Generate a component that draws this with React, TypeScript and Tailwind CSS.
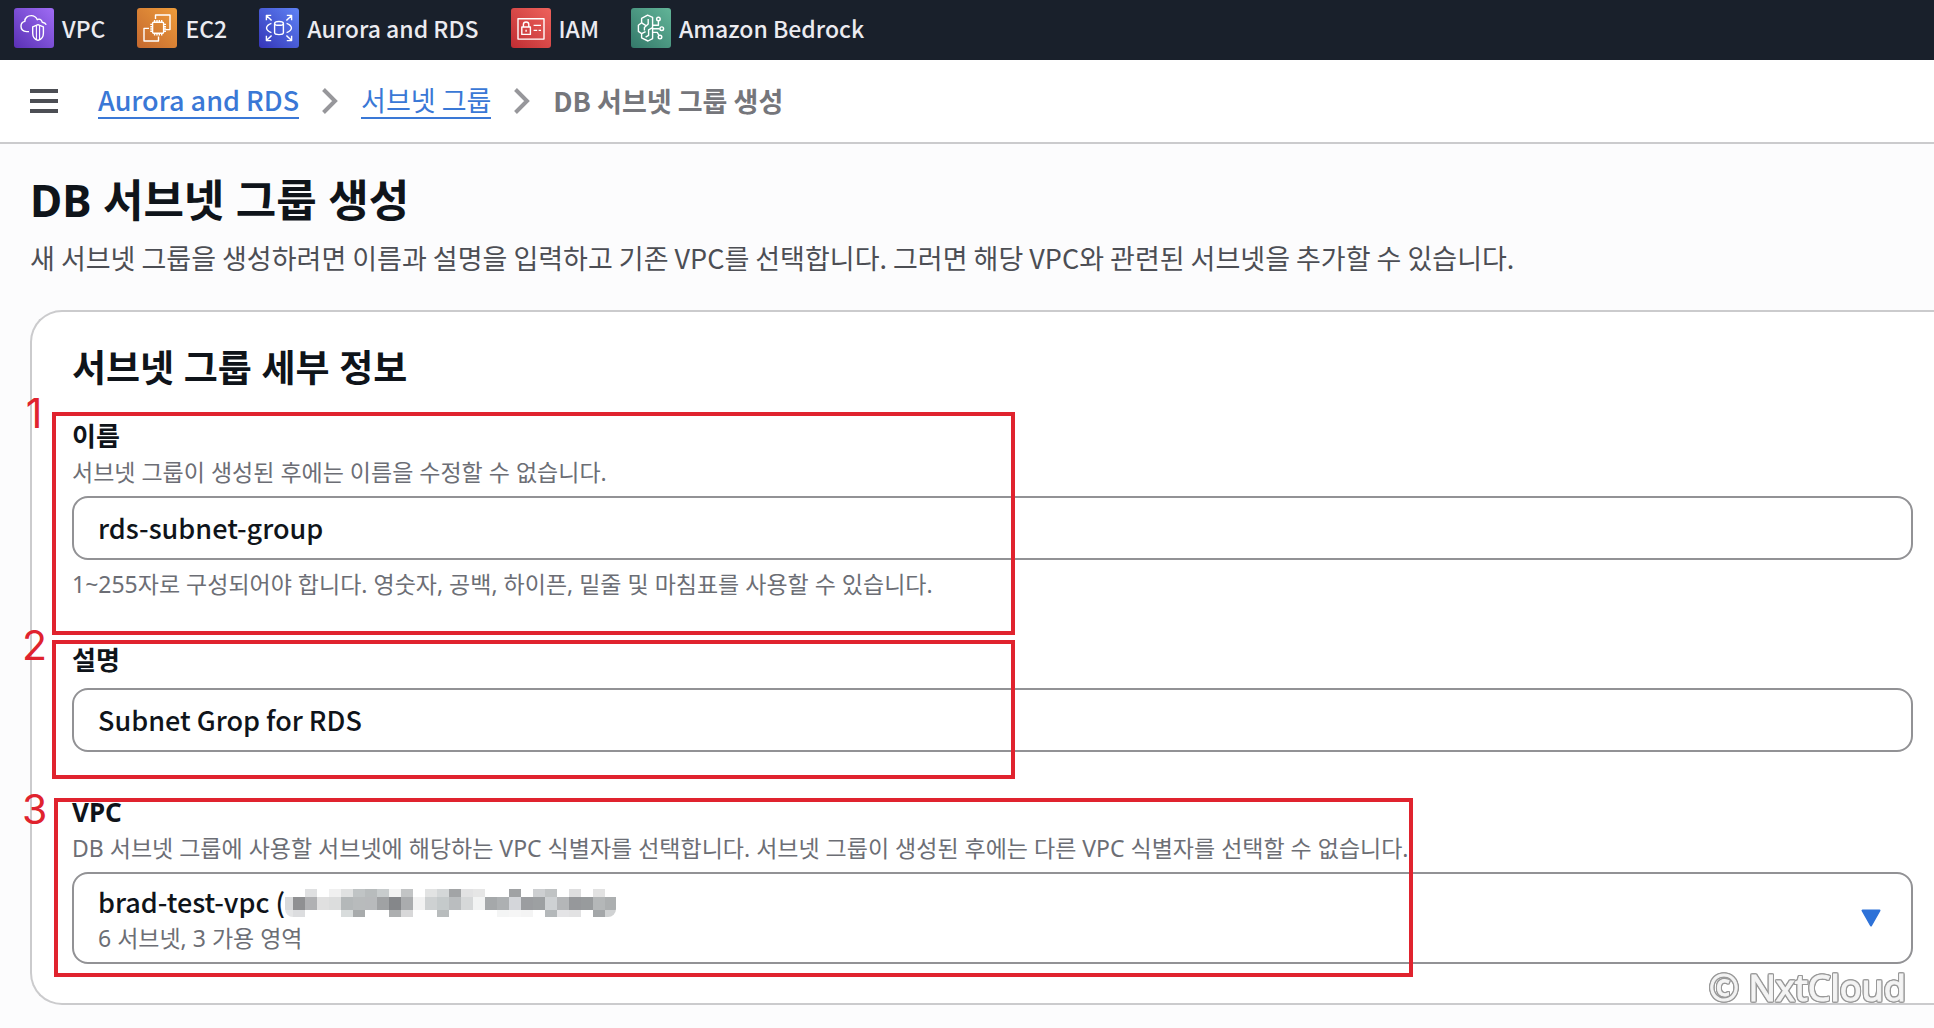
import type { ReactNode } from "react";

function Tile({ className, children }: { className: string; children: ReactNode }) {
  return (
    <span className={`block size-10 shrink-0 overflow-hidden rounded-[3px] bg-linear-to-tr ${className}`}>
      <svg viewBox="0 0 40 40" className="size-full" fill="none" stroke="white" strokeWidth="1.4" strokeLinejoin="round" aria-hidden="true">
        {children}
      </svg>
    </span>
  );
}

const services = [
  {
    name: "VPC",
    icon: (
      <Tile className="from-[#5a30b5] to-[#a06cf5]">
        <path d="M15 23.6H12.6C9.2 23.2 7 21.2 7 18.2C7 15.6 8.5 13.9 10.8 13.4C10.8 9.8 13.6 7.6 17.3 7.6C20.2 7.6 22.2 9.2 23.3 11.7C24.8 10.6 27.6 11.1 28.2 14.2C30.2 14.5 31.6 15.3 32.2 16.8" />
        <path d="M24 16.6L29.4 18.8V25.2C29.4 29 27.2 31.4 24 32.4C20.8 31.4 18.7 29 18.7 25.2V18.8Z" />
        <path d="M22.4 17.6V31.4M25.6 17.6V31.4" strokeWidth="1.1" />
      </Tile>
    ),
  },
  {
    name: "EC2",
    icon: (
      <Tile className="from-[#c4682f] to-[#ee9c3a]">
        <rect x="15.6" y="14.2" width="11" height="11" rx="1" />
        <path d="M18.5 11V7H33V21.6H28.5M12 20.4H7V33H21.5V28.5" />
        <path d="M17.6 14V12M20 14V12M22.3 14V12M24.7 14V12M17.6 25.4V27.6M20 25.4V27.6M22.3 25.4V27.6M24.7 25.4V27.6M15.4 16.4H13.3M15.4 18.7H13.3M15.4 21H13.3M15.4 23.2H13.3M26.8 16.4H29M26.8 18.7H29M26.8 21H29M26.8 23.2H29" />
      </Tile>
    ),
  },
  {
    name: "Aurora and RDS",
    icon: (
      <Tile className="from-[#3634b8] to-[#5f82f5]">
        <ellipse cx="20" cy="15.4" rx="4.4" ry="1.9" />
        <path d="M15.6 15.4V24.8C15.6 27.2 24.4 27.2 24.4 24.8V15.4" />
        <path d="M7.4 12.2V7.4H12.2M7.4 7.4L12.6 12.6M27.8 7.4H32.6V12.2M32.6 7.4L27.4 12.6M7.4 27.8V32.6H12.2M7.4 32.6L12.6 27.4M27.8 32.6H32.6V27.8M32.6 32.6L27.4 27.4" />
        <path d="M12.4 15.4C9.4 16.4 7.8 18 7.5 20C7.8 22 9.4 23.6 12.4 24.6M27.6 15.4C30.6 16.4 32.2 18 32.5 20C32.2 22 30.6 23.6 27.6 24.6" />
      </Tile>
    ),
  },
  {
    name: "IAM",
    icon: (
      <Tile className="from-[#c02c33] to-[#ee625c]">
        <rect x="7" y="10.7" width="26" height="20.4" />
        <rect x="10.8" y="19" width="8.6" height="7.4" />
        <path d="M12.4 19V16.6C12.4 13.2 17.8 13.2 17.8 16.6V19M15.1 21.8V23.8M22.6 17.4H30M22.6 22.4H26.2M27.6 22.4H30" />
      </Tile>
    ),
  },
  {
    name: "Amazon Bedrock",
    icon: (
      <Tile className="from-[#34796a] to-[#62b598]">
        <path d="M21.6 9.4V30.6L17 33L10.6 29.8V25.6L7.4 23.4V17.2L10.6 14.8V10.4L16.6 7.2L21.6 9.4Z" />
        <path d="M10.6 14.8L14.6 17.4M17.2 11V16L13.4 19.6V22.4M10.6 25.6L14.6 23.6M21.6 19.6L17.6 21.8V27.4L14.6 29.2" />
        <path d="M21.6 17.2H27.4V13M21.6 20.7H28.8M21.6 24.4H26.2L28 27.4" />
        <circle cx="27.4" cy="11" r="1.8" />
        <circle cx="30.8" cy="20.7" r="1.8" />
        <circle cx="29" cy="29" r="1.8" />
      </Tile>
    ),
  },
];

const mosaic = [
  ["", "#d8d9da", "#e4e5e6"],
  ["", "#8f9092", "#dcdddf"],
  ["#dfe0e1", "#b0b1b3", ""],
  ["", "#e0e0e0", ""],
  ["#f0f0f0", "#dcdddd", ""],
  ["#e0e1e1", "#b4b8b9", "#d8dcdc"],
  ["#c0c4c5", "#b8bbbc", "#a8abac"],
  ["#b8bcbd", "#b8babc", ""],
  ["#c8cccd", "#a0a2a4", ""],
  ["#f2f2f2", "#85878a", "#adafb0"],
  ["#c2c4c5", "#aaacae", "#d8d8d9"],
  ["", "#f2f2f2", ""],
  ["#e2e3e3", "#ced1d2", ""],
  ["#d4d7d8", "#c5cacb", "#b8bcbd"],
  ["#a2a4a6", "#babdbf", ""],
  ["#e2e2e3", "#d6d8d9", ""],
  ["#e6e6e6", "#f2f3f3", ""],
  ["", "#a5a8aa", ""],
  ["", "#adb0b2", "#f4f5f5"],
  ["#a0a2a4", "#d4d6da", "#f6f6f6"],
  ["", "#9b9da0", "#f4f4f4"],
  ["#cdcfd1", "#9da0a2", ""],
  ["#c0c3c4", "#ced1d3", "#b4b8ba"],
  ["", "#b4b6b8", "#e4e4e6"],
  ["#dededf", "#96989b", "#e2e2e3"],
  ["", "#989b9d", ""],
  ["#e2e2e2", "#b4b7b8", "#a4a7a9"],
  ["", "#acafb0", "#d0d2d3"],
];
const mosaicRows = [
  { y: 0, h: 8 },
  { y: 8, h: 13 },
  { y: 21, h: 7 },
];

function Chevron() {
  return (
    <svg viewBox="0 0 16 26" className="h-[26px] w-4" fill="none" stroke="#97979b" strokeWidth="4" aria-hidden="true">
      <path d="M1.5 1.5L13 13L1.5 24.5" />
    </svg>
  );
}

function Marker({ n, box, digit }: { n: number; box: string; digit: string }) {
  return (
    <>
      <span className={`pointer-events-none absolute border-4 border-[#e0232e] ${box}`} />
      <span className={`pointer-events-none absolute -left-[50px] w-6 text-center font-["Inter",sans-serif] text-[41px] leading-[42px] text-[#e0232e] ${digit}`}>
        {n}
      </span>
    </>
  );
}

const label = "block text-[26px] leading-8 font-bold text-[#0f141a]";
const hint = "text-[23px] leading-8 text-[#6c6e75]";
const value = 'font-["Noto_Sans_CJK_KR",sans-serif] text-[27px] font-medium text-[#0f141a]';
const input = `block h-16 w-full rounded-2xl border-2 border-[#929295] bg-white px-6 pb-[2px] ${value}`;

export default function App() {
  return (
    <div className='relative min-h-screen overflow-x-hidden bg-[#fcfcfd] font-["Noto_Sans","Noto_Sans_CJK_KR",sans-serif] text-[#0f141a]'>
      <nav className='flex h-[60px] items-center gap-8 bg-[#19202b] px-[14px] pb-1 font-["Noto_Sans_CJK_KR",sans-serif]'>
        {services.map((s) => (
          <a key={s.name} href="#" className="flex items-center gap-2 text-[23px] leading-8 font-medium whitespace-nowrap text-[#ebebf0]">
            {s.icon}
            {s.name}
          </a>
        ))}
      </nav>

      <header className="flex h-[84px] items-center border-b-2 border-[#cbcbcd] bg-white px-[30px]">
        <button type="button" aria-label="메뉴" className="mr-10 flex w-7 flex-col gap-[6px]">
          <span className="h-1 bg-[#4c4e54]" />
          <span className="h-1 bg-[#4c4e54]" />
          <span className="h-1 bg-[#4c4e54]" />
        </button>
        <div className='flex items-center gap-[23px] font-["Noto_Sans_CJK_KR",sans-serif] text-[27px] leading-[34px] whitespace-nowrap'>
          <a href="#" className="border-b-2 border-[#3a78d6] font-medium text-[#3a78d6]">Aurora and RDS</a>
          <Chevron />
          <a href="#" className="border-b-2 border-[#3a78d6] text-[#3a78d6]">서브넷 그룹</a>
          <Chevron />
          <span className="font-bold text-[#75767b]">DB 서브넷 그룹 생성</span>
        </div>
      </header>

      <main className="pt-7 pl-[30px]">
        <h1 className="text-[44px] leading-[56px] font-bold">DB 서브넷 그룹 생성</h1>
        <p className='mt-3 font-["Noto_Sans_CJK_KR",sans-serif] text-[27px] leading-9 text-[#4c4e54]'>
          새 서브넷 그룹을 생성하려면 이름과 설명을 입력하고 기존 VPC를 선택합니다. 그러면 해당 VPC와 관련된 서브넷을 추가할 수 있습니다.
        </p>

        <section className="mt-[34px] rounded-l-[32px] border-2 border-r-0 border-[#cbcbcd] bg-white pt-8 pr-[21px] pb-[39px] pl-10">
          <h2 className="text-[37px] leading-[48px] font-bold">서브넷 그룹 세부 정보</h2>

          <div className="relative mt-7">
            <label htmlFor="name" className={label}>이름</label>
            <p className={`mt-1 ${hint}`}>서브넷 그룹이 생성된 후에는 이름을 수정할 수 없습니다.</p>
            <input id="name" type="text" defaultValue="rds-subnet-group" className={`mt-2 ${input}`} />
            <p className={`mt-2 ${hint}`}>1~255자로 구성되어야 합니다. 영숫자, 공백, 하이픈, 밑줄 및 마침표를 사용할 수 있습니다.</p>
            <Marker n={1} box="-top-2 -left-5 h-[223px] w-[963px]" digit="-top-7" />
          </div>

          <div className="relative mt-11">
            <label htmlFor="description" className={label}>설명</label>
            <input id="description" type="text" defaultValue="Subnet Grop for RDS" className={`mt-3 ${input}`} />
            <Marker n={2} box="-top-1 -left-5 h-[139px] w-[963px]" digit="-top-5" />
          </div>

          <div className="relative mt-11">
            <label htmlFor="vpc" className={label}>VPC</label>
            <p className={`mt-1 ${hint}`}>
              DB 서브넷 그룹에 사용할 서브넷에 해당하는 VPC 식별자를 선택합니다. 서브넷 그룹이 생성된 후에는 다른 VPC 식별자를 선택할 수 없습니다.
            </p>
            <div className="relative mt-2">
              <select id="vpc" className={`block h-[92px] w-full appearance-none rounded-2xl border-2 border-[#929295] bg-white px-6 pt-3 pb-11 leading-8 ${value}`}>
                <option>brad-test-vpc (</option>
              </select>
              <svg viewBox="0 0 336 28" className="pointer-events-none absolute top-[17px] left-[209px] h-7 w-[336px]" aria-hidden="true">
                <clipPath id="redacted">
                  <rect x="4" y="0" width="331" height="28" rx="8" />
                </clipPath>
                <g clipPath="url(#redacted)" shapeRendering="crispEdges">
                  {mosaic.map((col, i) =>
                    col.map((fill, r) =>
                      fill ? <rect key={`${i}-${r}`} x={i * 12} y={mosaicRows[r].y} width="12" height={mosaicRows[r].h} fill={fill} /> : null,
                    ),
                  )}
                </g>
              </svg>
              <span className={`pointer-events-none absolute top-[50px] left-[26px] ${hint}`}>6 서브넷, 3 가용 영역</span>
              <svg viewBox="0 0 20 18" className="pointer-events-none absolute top-[37px] right-8 h-[18px] w-5" fill="#2e72d8" stroke="#2e72d8" strokeWidth="2" strokeLinejoin="round" aria-hidden="true">
                <path d="M1.5 1.5H18.5L10 16.5Z" />
              </svg>
            </div>
            <Marker n={3} box="top-[2px] -left-[18px] h-[179px] w-[1359px]" digit="-top-2" />
          </div>
        </section>
      </main>

      <span className='pointer-events-none absolute right-7 bottom-[18px] text-[36px] leading-[44px] text-[#f4f4f4] [-webkit-text-stroke:1px_#f4f4f4] [filter:drop-shadow(1px_0_0_#999)_drop-shadow(-1px_0_0_#999)_drop-shadow(0_1px_0_#999)_drop-shadow(0_-1px_0_#999)]'>
        © NxtCloud
      </span>
    </div>
  );
}
